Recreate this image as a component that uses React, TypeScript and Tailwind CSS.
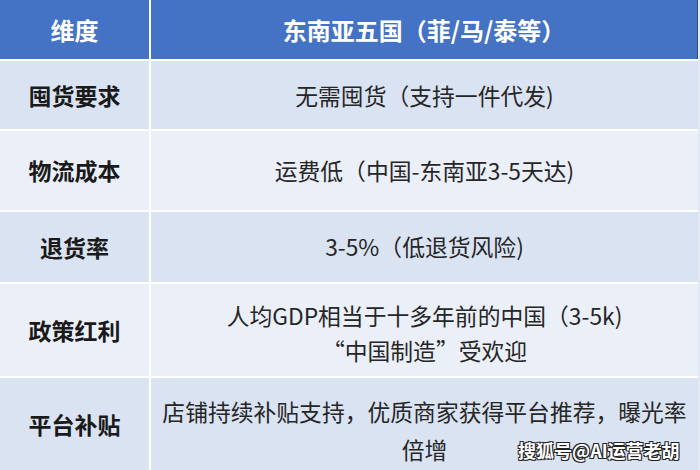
import React from "react";

const font = { fontFamily: '"Noto Sans CJK SC", "Noto Sans", sans-serif' };

type Row = { label: string; lines: string[]; bg: string; h: string; lh: string; pt: string };

const rows: Row[] = [
  { label: "囤货要求", lines: ["无需囤货（支持一件代发)"], bg: "bg-[#dae3f2]", h: "h-[70px]", lh: "leading-[34px]", pt: "pt-[2px]" },
  { label: "物流成本", lines: ["运费低（中国-东南亚3-5天达)"], bg: "bg-[#eaeff8]", h: "h-[81px]", lh: "leading-[34px]", pt: "pt-0" },
  { label: "退货率", lines: ["3-5%（低退货风险)"], bg: "bg-[#dae3f2]", h: "h-[72px]", lh: "leading-[34px]", pt: "pt-0" },
  { label: "政策红利", lines: ["人均GDP相当于十多年前的中国（3-5k)", "“中国制造”受欢迎"], bg: "bg-[#eaeff8]", h: "h-[94px]", lh: "leading-[35px]", pt: "pt-[6px]" },
  { label: "平台补贴", lines: ["店铺持续补贴支持，优质商家获得平台推荐，曝光率", "倍增"], bg: "bg-[#dae3f2]", h: "h-[93px]", lh: "leading-[38px]", pt: "pt-[12px]" },
];

export default function App() {
  return (
    <div className="relative w-[700px] h-[470px] overflow-hidden bg-[#e3e9f4]" style={font}>
      <div className="w-[698px] flex flex-col">
        <div className="flex h-[61px] bg-[#4472c4] border-b-2 border-white">
          <div className="w-[151px] border-r-2 border-white flex items-center justify-center text-white font-bold text-[24px]">
            维度
          </div>
          <div className="flex-1 flex items-center justify-center text-white font-bold text-[24px] border-r border-[#2f4f8a]">
            东南亚五国（菲/马/泰等）
          </div>
        </div>
        {rows.map((r, i) => (
          <div key={i} className={`flex ${r.h} ${r.bg} ${i < rows.length - 1 ? "border-b-2 border-white" : ""}`}>
            <div className="w-[151px] border-r-2 border-white flex items-center justify-center text-[#1a1a1a] font-bold text-[23px]">
              {r.label}
            </div>
            <div className={`flex-1 flex flex-col items-center justify-center text-[#262626] text-[22.8px] ${r.lh} ${r.pt}`}>
              {r.lines.map((l, j) => (
                <div key={j} className="whitespace-nowrap">{l}</div>
              ))}
            </div>
          </div>
        ))}
      </div>
      <div
        className="absolute left-[518px] top-[436px] text-white font-bold text-[18px] leading-[28px] whitespace-nowrap"
        style={{ textShadow: "1px 1px 0 #222, -1px -1px 0 #222, 1px -1px 0 #222, -1px 1px 0 #222" }}
      >
        搜狐号@AI运营老胡
      </div>
    </div>
  );
}
